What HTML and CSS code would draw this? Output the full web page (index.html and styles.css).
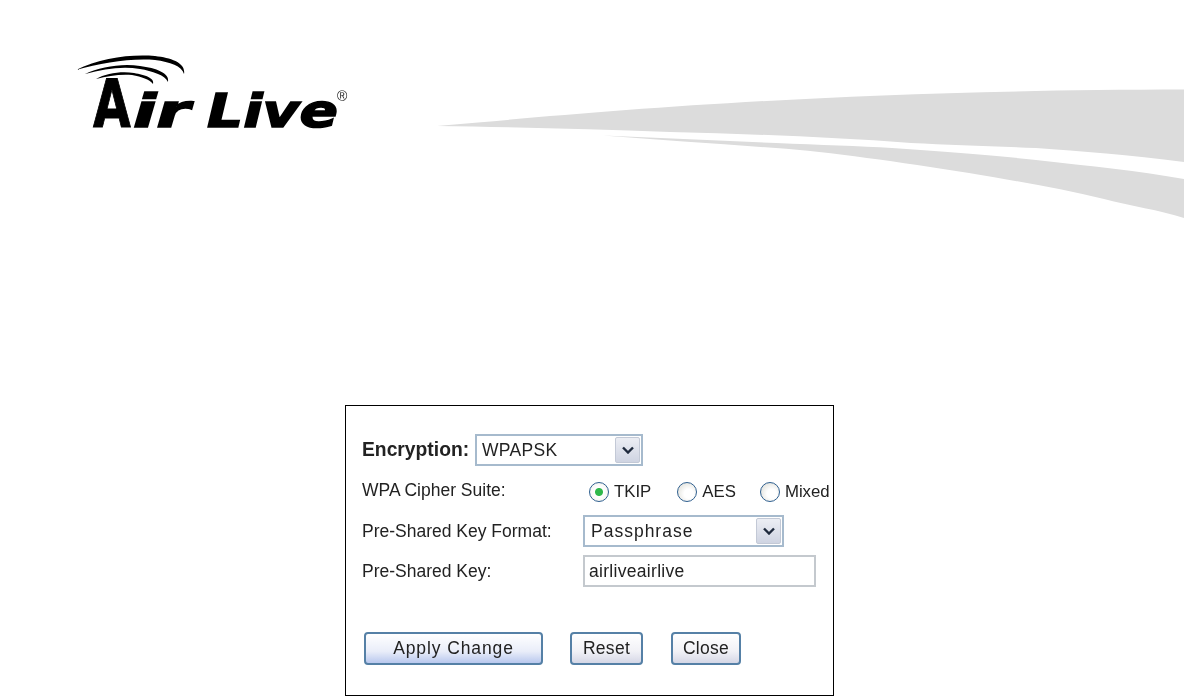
FILE: index.html
```html
<!DOCTYPE html>
<html lang="en">
<head>
  <meta charset="UTF-8">
  <meta name="viewport" content="width=device-width, initial-scale=1.0">
  <title>Air Live Wireless Settings</title>
  <link rel="stylesheet" href="styles.css">
</head>
<body>
  <header class="page-header">
    <svg class="logo" viewBox="70 50 290 100" role="img" aria-label="Air Live">
      <!-- signal arcs -->
      <path class="logo-arc" d="M76 70 C100 58 130 54 155 56 C172 58 186 63 184 74 C182 66 170 62 155 60 C130 58 102 63 76 70Z"/>
      <path class="logo-arc" d="M85 74 C100 67 122 63 140 66 C156 68 170 73 168 82 C165 75 152 71 140 69 C122 66 104 69 85 74Z"/>
      <path class="logo-arc" d="M96 79 C106 73 122 71 134 73 C145 75 155 78 153 84 C149 79 142 77 132 75 C120 74 108 76 96 79Z"/>
      <text class="logo-a" transform="translate(93 127) scale(0.74 1)">A</text>
      <text class="logo-word" x="133" y="127" textLength="57" lengthAdjust="spacingAndGlyphs">ir</text>
      <text class="logo-word" x="207" y="127" textLength="131" lengthAdjust="spacingAndGlyphs">Live</text>
      <text class="logo-reg" x="337" y="101">®</text>
    </svg>
    <svg class="swoosh" viewBox="437 80 747 140" aria-hidden="true">
      <path d="M437 126 L478 122.5 C640 108 860 90 1184 89.6 L1184 162 C1130 155 1080 151 1036 148 C990 146 950 145 911 143 C830 137 750 134 670 132 C590 129 510 127 437 126Z"/>
      <path d="M603 135.6 C660 138 720 141 776 143 C820 145 860 146 892 148 C950 152 1000 156 1036 160 C1090 166 1140 171 1184 179 L1184 218 C1160 210 1130 206 1104 199 C1060 188 1010 180 969 173 C900 162 830 152 776 148 C720 144 660 140 603 135.6Z"/>
    </svg>
  </header>

  <main class="panel">
    <form class="settings-form">
      <div class="form-row">
        <label class="label-strong" for="encryption">Encryption:</label>
        <div class="select-box select-enc">
          <select id="encryption" class="select-field">
            <option>WPAPSK</option>
          </select>
          <span class="select-arrow">
            <svg viewBox="0 0 12 8" width="12" height="8"><path d="M1 1.5 L6 6.5 L11 1.5" /></svg>
          </span>
        </div>
      </div>

      <div class="form-row">
        <label class="label-col">WPA Cipher Suite:</label>
        <div class="radio-group">
          <label class="radio-item radio-tkip"><input type="radio" name="cipher" checked>TKIP</label>
          <label class="radio-item radio-aes"><input type="radio" name="cipher">AES</label>
          <label class="radio-item"><input type="radio" name="cipher">Mixed</label>
        </div>
      </div>

      <div class="form-row">
        <label class="label-col" for="key-format">Pre-Shared Key Format:</label>
        <div class="select-box select-format">
          <select id="key-format" class="select-field">
            <option>Passphrase</option>
          </select>
          <span class="select-arrow">
            <svg viewBox="0 0 12 8" width="12" height="8"><path d="M1 1.5 L6 6.5 L11 1.5" /></svg>
          </span>
        </div>
      </div>

      <div class="form-row">
        <label class="label-col" for="psk">Pre-Shared Key:</label>
        <input id="psk" class="text-field" type="text" value="airliveairlive">
      </div>

      <div class="button-row">
        <button type="button" class="btn btn-apply">Apply Change</button>
        <button type="button" class="btn btn-reset">Reset</button>
        <button type="button" class="btn btn-close">Close</button>
      </div>
    </form>
  </main>
</body>
</html>
```

FILE: styles.css
```css
html, body {
  margin: 0;
  padding: 0;
  background-color: white;
  height: 696px;
  overflow: hidden;
}
body {
  font-family: "Liberation Sans", Arial, sans-serif;
  font-size: 17.5px;
  color: #222;
}

/* top banner */
.page-header {
  display: flex;
  align-items: flex-start;
  height: 405px;
}
.logo {
  width: 290px;
  height: 100px;
  margin: 50px 0 0 70px;
  filter: blur(0.4px);
}
.logo-arc {
  fill: #000;
}
.logo-a, .logo-word {
  font-family: "DejaVu Sans", sans-serif;
  font-weight: bold;
  fill: #000;
  stroke: #000;
}
.logo-a {
  font-size: 66px;
  stroke-width: 1px;
}
.logo-word {
  font-size: 46px;
  font-style: italic;
  stroke-width: 1.5px;
}
.logo-reg {
  font-family: "Liberation Sans", sans-serif;
  font-size: 14px;
  fill: #222;
}
.swoosh {
  width: 747px;
  height: 140px;
  margin: 80px 0 0 auto;
  fill: #dcdcdc;
}

/* settings box */
.panel {
  width: 489px;
  height: 291px;
  margin-left: 345px;
  box-sizing: border-box;
  border: 1px solid #000;
  padding: 28px 0 0 16px;
}
.settings-form {
  display: flex;
  flex-direction: column;
  gap: 8px;
  filter: blur(0.4px);
}
.form-row {
  display: flex;
  align-items: center;
  min-height: 32px;
}
.label-strong {
  font-weight: bold;
  font-size: 19.3px;
  width: 113px;
}
.label-col {
  width: 221px;
  flex-shrink: 0;
}

.select-box {
  display: flex;
  box-sizing: border-box;
  height: 32px;
  padding: 1px;
  border: 2px solid #a6bacd;
  background-color: white;
}
.select-enc {
  width: 168px;
}
.select-format {
  width: 201px;
}
.select-field {
  flex: 1;
  min-width: 0;
  appearance: none;
  border: none;
  outline: none;
  background: transparent;
  padding: 0 0 0 4px;
  font: inherit;
  letter-spacing: 0.3px;
  color: #222;
}
.select-format .select-field {
  padding-left: 5px;
  letter-spacing: 1px;
}
.select-arrow {
  display: flex;
  align-items: center;
  justify-content: center;
  width: 23px;
  border: 1px solid #c3c9d6;
  border-radius: 2px;
  background: linear-gradient(#eceef4, #cfd4e2);
}
.select-arrow path {
  fill: none;
  stroke: #1f2a3d;
  stroke-width: 2.4;
}

.radio-group {
  display: flex;
  align-items: center;
  padding: 3px 0 0 6px;
  min-height: 30px;
  font-size: 16.8px;
}
.radio-item {
  display: flex;
  align-items: center;
  gap: 5px;
}
.radio-tkip {
  margin-right: 26px;
}
.radio-aes {
  margin-right: 24px;
}
.radio-item input {
  appearance: none;
  width: 20px;
  height: 20px;
  margin: 0;
  border: 1px solid #2f5f8f;
  border-radius: 50%;
  background: radial-gradient(circle at 60% 60%, #fff 30%, #d8d8d0 100%);
}
.radio-item input:checked {
  background: radial-gradient(circle, #2fb84a 0, #2fb84a 3.5px, #fff 4.5px, #f0f0ea 100%);
}

.text-field {
  box-sizing: border-box;
  width: 233px;
  height: 32px;
  padding: 0 4px;
  border: 2px solid #c4c9ce;
  outline: none;
  font: inherit;
  letter-spacing: 0.3px;
  color: #222;
}

.button-row {
  display: flex;
  margin: 37px 0 0 2px;
}
.btn {
  box-sizing: border-box;
  height: 33px;
  padding: 0;
  border: 2px solid #5580a6;
  border-radius: 4px;
  background: linear-gradient(#ffffff 0%, #f1f1f6 60%, #d5d7e6 100%);
  font: inherit;
  letter-spacing: 0.3px;
  color: #222;
}
.btn-apply {
  width: 179px;
  margin-right: 27px;
  letter-spacing: 0.9px;
  background: linear-gradient(#ffffff 0%, #e9edf9 60%, #b9c8ee 100%);
}
.btn-reset {
  width: 73px;
  margin-right: 28px;
}
.btn-close {
  width: 70px;
}
```
